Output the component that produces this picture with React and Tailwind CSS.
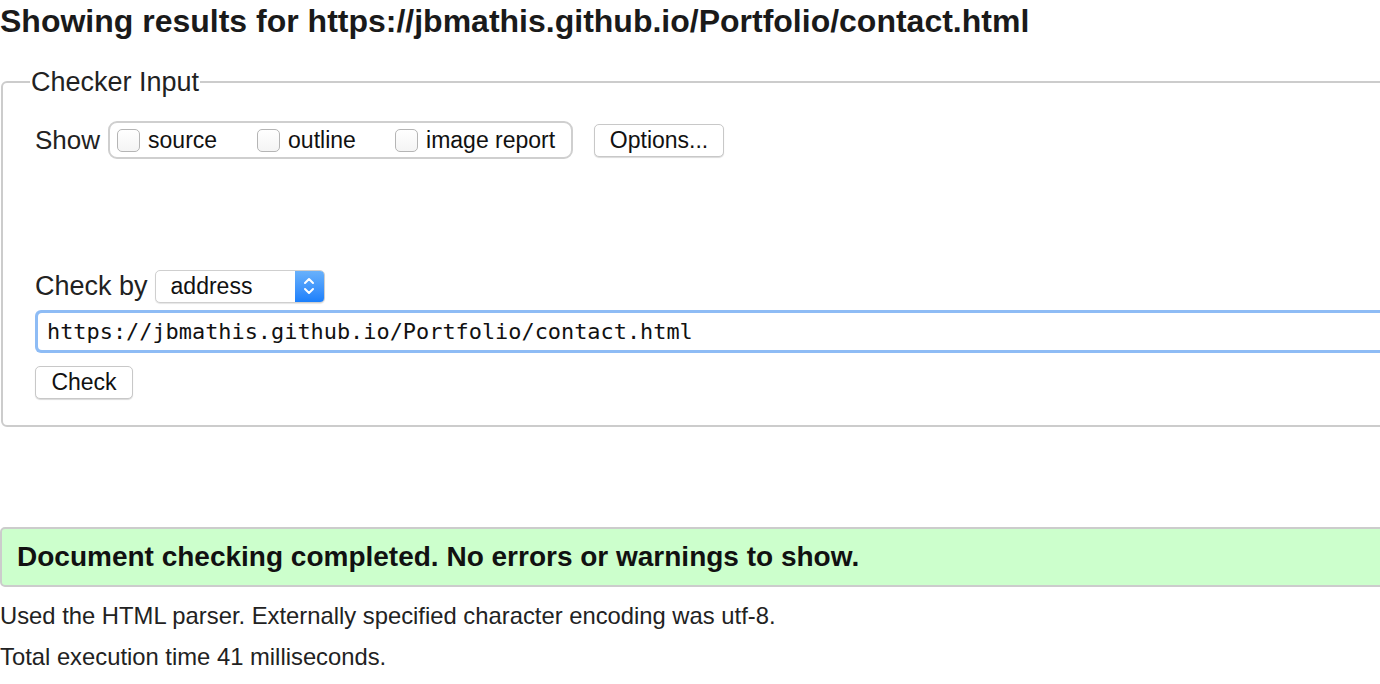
export default function App() {
  const sans = { fontFamily: '"Liberation Sans", Arial, sans-serif' };
  return (
    <div className="w-[1380px] h-[684px] overflow-hidden bg-white text-[#222]" style={sans}>
      <h1 className="m-0 pt-[3px] h-[40px] text-[32px] leading-[36px] font-bold text-[#1a1a1a] whitespace-nowrap">
        Showing results for https://jbmathis.github.io/Portfolio/contact.html
      </h1>
      <fieldset className="mt-[29px] ml-[1px] w-[1420px] h-[358px] border-2 border-[#cccccc] rounded-[6px] pl-[32px] pr-0 pt-0 pb-0 m-0">
        <legend className="px-[1px] ml-[-5px] text-[27px] leading-[26px] text-[#222]">Checker Input</legend>
        <div className="flex items-center h-[40px] mt-[25px]">
          <span className="text-[26px] mr-[8px]">Show</span>
          <div className="flex items-center h-[38px] w-[465px] border-2 border-[#cfcfcf] rounded-[9px] pl-[7px]">
            <Cb label="source" w="w-[140px]" />
            <Cb label="outline" w="w-[138px]" />
            <Cb label="image report" w="w-[170px]" />
          </div>
          <button className="ml-[21px] h-[33px] w-[130px] border border-[#c8c8c8] rounded-[5px] bg-white text-[23px] leading-[31px] text-[#111] shadow-[0_1px_1px_rgba(0,0,0,0.15)]">
            Options...
          </button>
        </div>
        <div className="flex items-center h-[34px] mt-[109px]">
          <span className="text-[27px] mr-[7px] whitespace-nowrap">Check by</span>
          <div className="flex shrink-0 h-[33px] w-[170px] border border-[#cfcfcf] rounded-[5px] bg-white overflow-hidden shadow-[0_1px_1px_rgba(0,0,0,0.1)]">
            <span className="flex-1 pl-[15px] text-[23px] leading-[31px] text-[#111]">address</span>
            <span className="w-[29px] flex items-center justify-center bg-gradient-to-b from-[#68b1fb] to-[#1a7ffb]">
              <svg width="14" height="22" viewBox="0 0 14 22" fill="none" stroke="white" strokeWidth="2" strokeLinecap="round" strokeLinejoin="round">
                <path d="M3 8 L7 4 L11 8" />
                <path d="M3 14 L7 18 L11 14" />
              </svg>
            </span>
          </div>
        </div>
        <div className="mt-[7px] h-[43px] w-[1400px] rounded-[6px] bg-[#8ebcf5] p-[3px]">
          <div className="h-full w-full rounded-[4px] bg-white pl-[9px] text-[21.9px] leading-[37px] text-[#111]" style={{ fontFamily: '"DejaVu Sans Mono", monospace' }}>
            https://jbmathis.github.io/Portfolio/contact.html
          </div>
        </div>
        <button className="mt-[13px] h-[33px] w-[98px] border border-[#c8c8c8] rounded-[5px] bg-white text-[23px] leading-[31px] text-[#111] shadow-[0_1px_1px_rgba(0,0,0,0.15)]">
          Check
        </button>
      </fieldset>
      <div className="mt-[100px] w-[1420px] h-[60px] bg-[#ccffcc] border-2 border-[#cccccc] rounded-[5px] pl-[15px] flex items-center">
        <span className="text-[28px] font-bold text-[#111] whitespace-nowrap">Document checking completed. No errors or warnings to show.</span>
      </div>
      <p className="m-0 mt-[15px] text-[23.8px] leading-[28px] text-[#222] whitespace-nowrap">Used the HTML parser. Externally specified character encoding was utf-8.</p>
      <p className="m-0 mt-[13px] text-[23.8px] leading-[28px] text-[#222] whitespace-nowrap">Total execution time 41 milliseconds.</p>
    </div>
  );
}

function Cb({ label, w }) {
  return (
    <label className={`flex items-center shrink-0 ${w}`}>
      <span className="inline-block shrink-0 w-[23px] h-[23px] rounded-[5px] border border-[#b5b5b5] bg-gradient-to-b from-white to-[#f4f4f4] mr-[8px]" />
      <span className="text-[23px] text-[#111] whitespace-nowrap">{label}</span>
    </label>
  );
}
